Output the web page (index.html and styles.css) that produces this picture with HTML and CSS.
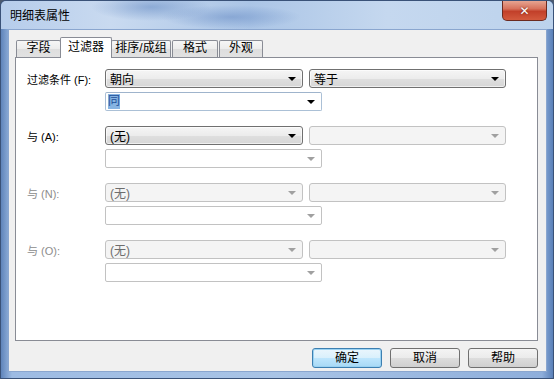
FILE: index.html
```html
<!DOCTYPE html>
<html lang="zh-CN">
<head>
  <meta charset="UTF-8" />
  <title>明细表属性</title>
  <link rel="stylesheet" href="styles.css">
</head>
<body>
  <div class="window">
    <div class="titlebar">
      <span class="title">明细表属性</span>
      <button class="close-btn">✕</button>
    </div>

    <div class="client">
      <div class="tabs">
        <div class="tab tab-fields">字段</div>
        <div class="tab tab-filter active">过滤器</div>
        <div class="tab tab-sort">排序/成组</div>
        <div class="tab tab-format">格式</div>
        <div class="tab tab-look">外观</div>
      </div>

      <div class="panel">
        <div class="filter-row">
          <div class="label">过滤条件 (F):</div>
          <div class="combo"><span>朝向</span><span class="arrow"></span></div>
          <div class="combo"><span>等于</span><span class="arrow"></span></div>
          <div class="field"><span class="selected">同</span><span class="arrow"></span></div>
        </div>

        <div class="filter-row">
          <div class="label">与 (A):</div>
          <div class="combo"><span>(无)</span><span class="arrow"></span></div>
          <div class="combo disabled"><span></span><span class="arrow"></span></div>
          <div class="field disabled"><span></span><span class="arrow"></span></div>
        </div>

        <div class="filter-row">
          <div class="label disabled">与 (N):</div>
          <div class="combo disabled"><span>(无)</span><span class="arrow"></span></div>
          <div class="combo disabled"><span></span><span class="arrow"></span></div>
          <div class="field disabled"><span></span><span class="arrow"></span></div>
        </div>

        <div class="filter-row">
          <div class="label disabled">与 (O):</div>
          <div class="combo disabled"><span>(无)</span><span class="arrow"></span></div>
          <div class="combo disabled"><span></span><span class="arrow"></span></div>
          <div class="field disabled"><span></span><span class="arrow"></span></div>
        </div>
      </div>

      <div class="footer">
        <button class="btn default">确定</button>
        <button class="btn">取消</button>
        <button class="btn">帮助</button>
      </div>
    </div>
  </div>
</body>
</html>
```

FILE: styles.css
```css
html, body {
  margin: 0;
  padding: 0;
  background-color: #4b5a70;
  font-family: "Liberation Sans", "Noto Sans CJK SC", sans-serif;
  font-size: 12px;
  color: #000;
}

.window {
  width: 554px;
  height: 379px;
  box-sizing: border-box;
  display: flex;
  flex-direction: column;
  border: 1px solid #3a5278;
  border-radius: 6px 6px 0 0;
  background: linear-gradient(to right, #5f84ba 0%, #9dbbe3 2%, #a9c4e6 50%, #8eaedb 98%, #5a80b8 100%);
  overflow: hidden;
}

.titlebar {
  height: 28px;
  flex-shrink: 0;
  display: flex;
  align-items: flex-start;
  padding-left: 9px;
  padding-right: 6px;
  background:
    radial-gradient(ellipse 60px 14px at 150px 6px, rgba(90, 130, 190, 0.5), transparent),
    radial-gradient(ellipse 70px 12px at 230px 16px, rgba(80, 120, 185, 0.4), transparent),
    linear-gradient(to right, #b6cdeb 0%, #c9daf0 20%, #abc5e6 45%, #c5d8ef 70%, #bcd2ec 100%);
}

.title {
  margin-top: 7px;
  line-height: 16px;
}

.close-btn {
  margin-left: auto;
  width: 45px;
  height: 20px;
  padding: 0;
  border: 1px solid #6b2a20;
  border-top: none;
  border-radius: 0 0 5px 5px;
  background: linear-gradient(#e6a491 0%, #d7735d 40%, #c2402a 55%, #d35a3e 100%);
  color: #fff;
  font-family: "DejaVu Sans", sans-serif;
  font-size: 12px;
  font-weight: 700;
  line-height: 18px;
  text-shadow: 0 0 2px #5a1a10;
}

.client {
  flex: 1;
  margin: 0 6px 6px 7px;
  display: flex;
  flex-direction: column;
  background-color: #f0f0f0;
  border: 1px solid #8aa6cf;
}

/* tab strip */
.tabs {
  height: 27px;
  flex-shrink: 0;
  display: flex;
  align-items: flex-end;
  padding-left: 7px;
}

.tab {
  height: 17px;
  box-sizing: border-box;
  margin-right: 1px;
  border: 1px solid #898c95;
  border-bottom: none;
  border-radius: 2px 2px 0 0;
  background: linear-gradient(#f6f6f6, #ececec 50%, #dedede 51%, #e2e2e2);
  line-height: 15px;
  text-align: center;
  white-space: nowrap;
}

.tab-fields { width: 45px; }
.tab-filter { width: 49px; }
.tab-sort { width: 60px; }
.tab-format { width: 46px; }
.tab-look { width: 44px; }

.tab.active {
  height: 21px;
  margin: 0 -1px -1px -2px;
  width: 52px;
  position: relative;
  z-index: 1;
  background: #fff;
  line-height: 18px;
}

/* tab panel */
.panel {
  height: 284px;
  width: 523px;
  box-sizing: border-box;
  margin-left: 6px;
  padding: 11px 0 0 11px;
  border: 1px solid #898c95;
  background-color: #fff;
}

.filter-row {
  display: grid;
  grid-template-columns: 72px 198px 197px;
  grid-template-rows: 19px 19px;
  column-gap: 6px;
  row-gap: 4px;
  margin-bottom: 15px;
}

.label {
  align-self: center;
  white-space: nowrap;
  font-size: 11px;
}

.label.disabled {
  color: #8c8c8c;
}

.combo,
.field {
  box-sizing: border-box;
  height: 19px;
  display: flex;
  align-items: center;
  justify-content: space-between;
  padding: 0 6px 0 4px;
  white-space: nowrap;
}

.combo {
  border: 1px solid #707070;
  border-radius: 3px;
  background: linear-gradient(#f5f5f5, #ececec 50%, #dfdfdf 51%, #d6d6d6);
  box-shadow: inset 0 0 0 1px rgba(255, 255, 255, 0.6);
}

.combo.disabled {
  border-color: #c2c2c2;
  background: #f4f4f4;
  box-shadow: none;
  color: #6d6d6d;
}

.field {
  grid-column: 2 / span 2;
  width: 217px;
  border: 1px solid #abc0d6;
  border-top-color: #9fb4cc;
  border-radius: 2px;
  background-color: #fff;
  padding-left: 2px;
}

.field.disabled {
  border-color: #c2c2c2;
}

.selected {
  background-color: #86b4e2;
  color: #1e4f9a;
  line-height: 15px;
}

.arrow {
  width: 0;
  height: 0;
  border-left: 4px solid transparent;
  border-right: 4px solid transparent;
  border-top: 4px solid #000;
}

.disabled .arrow {
  border-top-color: #a0a0a0;
}

/* dialog buttons */
.footer {
  display: flex;
  justify-content: flex-end;
  gap: 8px;
  padding: 7px 8px 0 0;
}

.btn {
  width: 70px;
  height: 20px;
  padding: 0;
  border: 1px solid #707070;
  border-radius: 3px;
  background: linear-gradient(#f4f4f4, #ebebeb 50%, #dddddd 51%, #d0d0d0);
  font-family: inherit;
  font-size: 12px;
  line-height: 18px;
  color: #000;
}

.btn.default {
  border-color: #3c7fb1;
  background: linear-gradient(#eaf6fd, #d9f0fc 50%, #bee6fd 51%, #a7d9f5);
  box-shadow: inset 0 0 0 1px #9ad2f2;
}
```
